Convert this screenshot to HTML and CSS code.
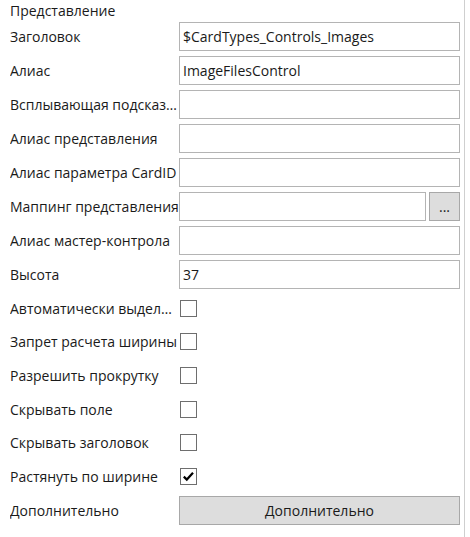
FILE: index.html
```html
<!DOCTYPE html>
<html lang="ru">
<head>
<meta charset="utf-8">
<link rel="stylesheet" href="styles.css">
</head>
<body>
<div class="panel">
  <div class="title">Представление</div>
  <div class="form">
    <div class="row"><div class="label">Заголовок</div><div class="field"><div class="input">$CardTypes_Controls_Images</div></div></div>
    <div class="row"><div class="label">Алиас</div><div class="field"><div class="input">ImageFilesControl</div></div></div>
    <div class="row"><div class="label">Всплывающая подсказка</div><div class="field"><div class="input"></div></div></div>
    <div class="row"><div class="label">Алиас представления</div><div class="field"><div class="input"></div></div></div>
    <div class="row"><div class="label">Алиас параметра CardID</div><div class="field"><div class="input"></div></div></div>
    <div class="row"><div class="label">Маппинг представления</div><div class="field"><div class="input"></div><div class="btn small">...</div></div></div>
    <div class="row"><div class="label">Алиас мастер-контрола</div><div class="field"><div class="input"></div></div></div>
    <div class="row"><div class="label">Высота</div><div class="field"><div class="input">37</div></div></div>
    <div class="row check"><div class="label">Автоматически выделять</div><div class="field"><div class="box"></div></div></div>
    <div class="row check"><div class="label">Запрет расчета ширины</div><div class="field"><div class="box"></div></div></div>
    <div class="row check"><div class="label">Разрешить прокрутку</div><div class="field"><div class="box"></div></div></div>
    <div class="row check"><div class="label">Скрывать поле</div><div class="field"><div class="box"></div></div></div>
    <div class="row check"><div class="label">Скрывать заголовок</div><div class="field"><div class="box"></div></div></div>
    <div class="row check"><div class="label">Растянуть по ширине</div><div class="field"><div class="box"><svg width="15" height="15" viewBox="0 0 15 15"><path d="M2.8 7.6 L5.8 10.6 L12 3.8" fill="none" stroke="#000" stroke-width="2.2"/></svg></div></div></div>
    <div class="row"><div class="label">Дополнительно</div><div class="field"><div class="btn wide">Дополнительно</div></div></div>
  </div>
</div>
</body>
</html>
```
FILE: styles.css
```css
html, body {
  margin: 0;
  padding: 0;
  background: #ffffff;
}
body {
  font-family: "Open Sans", "Noto Sans", sans-serif;
  font-size: 14px;
  color: #1a1a1a;
}
.panel {
  width: 465px;
  height: 537px;
  border-right: 1px solid #cfcfcf;
  box-sizing: border-box;
  padding: 0 4px 0 10px;
}
.title {
  height: 22px;
  line-height: 22px;
}
.form {
  display: flex;
  flex-direction: column;
  gap: 5px;
}
.row {
  display: grid;
  grid-template-columns: 169px 1fr;
  height: 29px;
  align-items: center;
}
.row.check {
  height: 28.6px;
}
.label {
  white-space: nowrap;
  overflow: hidden;
  text-overflow: ellipsis;
}
.field {
  display: flex;
  gap: 3px;
  height: 100%;
  align-items: center;
}
.input {
  flex: 1;
  height: 29px;
  box-sizing: border-box;
  border: 1px solid #b4b4b4;
  padding: 0 3px;
  line-height: 27px;
  white-space: nowrap;
  overflow: hidden;
}
.btn {
  height: 29px;
  box-sizing: border-box;
  border: 1px solid #a8a8a8;
  background: #dddddd;
  text-align: center;
  line-height: 27px;
}
.btn.small {
  width: 31px;
}
.btn.wide {
  flex: 1;
}
.box {
  width: 17px;
  height: 17px;
  box-sizing: border-box;
  border: 1px solid #6e6e6e;
  margin-left: 1px;
  display: flex;
  align-items: center;
  justify-content: center;
}
.box svg {
  display: block;
}
```
